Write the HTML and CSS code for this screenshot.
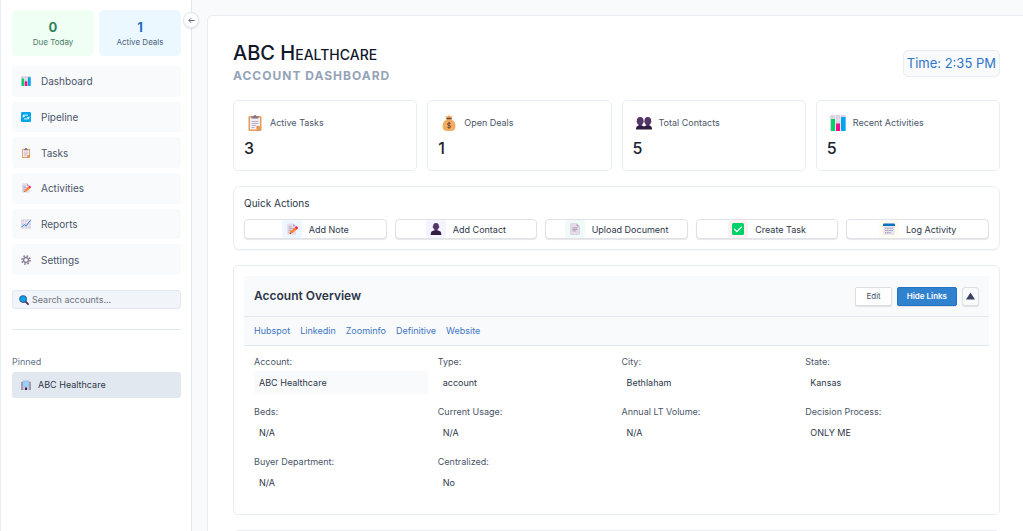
FILE: index.html
```html
<!DOCTYPE html>
<html lang="en">
<head>
  <meta charset="UTF-8">
  <title>ABC Healthcare - Account Dashboard</title>
  <link rel="stylesheet" href="styles.css">
</head>
<body>
  <svg class="sprite" aria-hidden="true">
    <symbol id="i-chart" viewBox="0 0 16 16">
      <rect width="16" height="16" rx="1.5" fill="#ddd3e3"/>
      <path d="M0 5h16M5.3 0v16M10.7 0v16" stroke="#f3eef6" stroke-width=".8"/>
      <rect x="1" y="4" width="4" height="12" fill="#00d26a"/>
      <rect x="6" y="8.500" width="4" height="7.500" fill="#f70a8d"/>
      <rect x="11" y="2" width="4.500" height="14" fill="#00a6ed"/>
    </symbol>
    <symbol id="i-sync" viewBox="0 0 16 16">
      <rect width="16" height="16" rx="2" fill="#00a6ed"/>
      <path d="M3.500 8.500V7.300Q3.500 5 6 5h5M12.500 7.500v1.200Q12.500 11 10 11H5" fill="none" stroke="#fff" stroke-width="1.500"/>
      <path d="M3 3.500v4h4zM13 12.500v-4H9z" fill="#fff"/>
    </symbol>
    <symbol id="i-clipboard" viewBox="0 0 16 16">
      <rect x="1.500" y="1" width="13" height="15" rx="1.500" fill="#e39d54"/>
      <path d="M3 2.500h10v8.500l-3.500 3.500H3z" fill="#f3eef8"/>
      <path d="M13 11l-3.500 3.500V11z" fill="#e8873a"/>
      <path d="M4.500 6.500h7M4.500 8.500h7M4.500 10.500h4.500M4.500 12.500h3" stroke="#aaa0b4" stroke-width=".8"/>
      <path d="M4.500 3.500V1.500h2a1.500 1.500 0 0 1 3 0h2v2z" fill="#7d7385"/>
    </symbol>
    <symbol id="i-memo" viewBox="0 0 16 16">
      <path d="M1.500 1.500Q1.500.5 2.500.5h7l4 4V14.500q0 1-1 1h-10q-1 0-1-1z" fill="#e5dceb"/>
      <path d="M9.500.5l4 4h-3q-1 0-1-1z" fill="#b4a6bf"/>
      <path d="M3.500 5h4M3.500 7.500h7M3.500 10h4M3.500 12.500h2" stroke="#998ea4" stroke-width=".9"/>
      <path d="M5 14.500l1-3.500 6.500-5.500 2.300 2.700-6.500 5.500z" fill="#ff822d"/>
      <path d="M12 5.900l1.300-1.200q.8-.5 1.400.1l1 1.200q.5.7-.1 1.300l-1.300 1.300z" fill="#f8124f"/>
      <path d="M5 14.500l.4-1.500 1.200 1.300z" fill="#402a32"/>
    </symbol>
    <symbol id="i-trend" viewBox="0 0 16 16">
      <rect width="16" height="15" y=".5" rx="1" fill="#ddd3e3"/>
      <path d="M0 5.500h16M0 10.500h16M5.500 0v16M10.500 0v16" stroke="#f8f3fa" stroke-width=".8"/>
      <path d="M1 13l4-4 3.500 2 3-4.500 3.500-4" fill="none" stroke="#2b88d8" stroke-width="1.600"/>
    </symbol>
    <symbol id="i-gear" viewBox="0 0 16 16">
      <circle cx="8" cy="8" r="4" fill="none" stroke="#8b8094" stroke-width="2.400"/>
      <circle cx="8" cy="8" r="6.500" fill="none" stroke="#8b8094" stroke-width="2.600" stroke-dasharray="2.700 2.404"/>
    </symbol>
    <symbol id="i-search" viewBox="0 0 16 16">
      <path d="M10 10l4.500 4.500" stroke="#533566" stroke-width="3" stroke-linecap="round"/>
      <circle cx="6.500" cy="6.500" r="5.300" fill="#00a6ed" stroke="#35609c" stroke-width="1.800"/>
    </symbol>
    <symbol id="i-office" viewBox="0 0 16 16">
      <path d="M0 3.500L3.500 2v14H0zM16 3.500L12.500 2v14H16z" fill="#998ea4"/>
      <rect x="3" y=".5" width="10" height="15.500" fill="#c3c4d6"/>
      <path d="M4 2h8v9H4z" fill="#83cbff"/>
      <path d="M4 5h8M4 8h8M8 2v9" stroke="#c9dff2" stroke-width=".7"/>
      <path d="M6.500 12h3v4h-3z" fill="#321b41"/>
      <path d="M1.500 5v9M14.500 5v9" stroke="#d3c9db" stroke-dasharray="1.500 1"/>
    </symbol>
    <symbol id="i-money" viewBox="0 0 16 16">
      <path d="M5.500 3L4 1l2.300.5L8 0l1.700 1.500L12 1l-1.500 2z" fill="#f3ad61"/>
      <path d="M6 4Q1.500 6.500 1.500 11 1.500 16 6 16h4q4.500 0 4.500-5Q14.500 6.500 10 4z" fill="#f3ad61"/>
      <rect x="5.200" y="2.800" width="5.600" height="1.500" rx=".7" fill="#6d4534"/>
      <path d="M9.700 8.500Q9.200 7.900 8 7.900q-1.500 0-1.500 1.200Q6.500 10.200 8 10.300q1.600.1 1.600 1.300Q9.600 12.800 8 12.800q-1.200 0-1.700-.8M8 6.800v7" fill="none" stroke="#6d4534" stroke-width=".9"/>
    </symbol>
    <symbol id="i-person" viewBox="0 0 16 16">
      <path d="M4.200 4Q4.200 0 8 0t3.800 4q.8.300.6 1.500-.2 1-.9 1.100Q10.900 8.500 9.500 9.300v1.500h-3V9.300Q5.100 8.500 4.500 6.600q-.7-.1-.9-1.100Q3.400 4.300 4.200 4z" fill="#533566"/>
      <path d="M1 16v-2q0-3 3-3.600l2.500-.8h3l2.500.8q3 .6 3 3.600v2z" fill="#321b41"/>
    </symbol>
    <symbol id="i-people" viewBox="0 0 16 16">
      <path d="M.9 5.500Q.9 2 4.200 2t3.300 3.500q.8.600 0 1.800-.5 2-1.800 2.700v1.500h-3V10Q1.400 9.300.9 7.300q-.8-1.200 0-1.800zM8.500 5.500Q8.500 2 11.800 2t3.300 3.500q.8.600 0 1.800-.5 2-1.800 2.700v1.500h-3V10Q9 9.300 8.500 7.300q-.8-1.200 0-1.800z" fill="#533566"/>
      <path d="M0 14.500v-1Q0 11 2.500 10.500h3.400L8 11.500l2.100-1h3.400Q16 11 16 13.500v1z" fill="#321b41"/>
    </symbol>
    <symbol id="i-page" viewBox="0 0 16 16">
      <path d="M2 1.500Q2 .5 3 .5h7l4 4v10q0 1-1 1H3q-1 0-1-1z" fill="#e5dceb" stroke="#cdbfd6" stroke-width=".7"/>
      <path d="M10 .5l4 4h-3q-1 0-1-1z" fill="#b4a6bf"/>
      <path d="M4.500 6.500h7M4.500 8.500h7M4.500 10.500h5" stroke="#998ea4"/>
    </symbol>
    <symbol id="i-check" viewBox="0 0 16 16">
      <rect width="16" height="16" rx="2" fill="#00d26a"/>
      <path d="M3 8l3.500 3.500 6.500-6.500" fill="none" stroke="#fff" stroke-width="1.800"/>
    </symbol>
    <symbol id="i-calendar" viewBox="0 0 16 16">
      <rect x=".5" y="1" width="15" height="15" rx="1.500" fill="#e9e2ef"/>
      <path d="M0 4V2Q0 .5 1.500.5h13Q16 .5 16 2v2z" fill="#0074ba"/>
      <path d="M3 7h1.400M5.800 7h1.400M8.600 7H10M11.400 7h1.400M3 10h1.400M5.800 10h1.400M8.600 10H10M3 13h1.400M5.800 13h1.400M8.600 13H10" stroke="#7d7688" stroke-width="1.400"/>
      <path d="M11.400 10h1.500" stroke="#00a6ed" stroke-width="1.600"/>
    </symbol>
  </svg>

  <div class="app">
    <aside class="sidebar">
      <button class="toggle" type="button" aria-label="Collapse sidebar">
        <svg viewBox="0 0 8 8"><path d="M7.500 4H1M3.500 1.500L1 4l2.500 2.500" fill="none" stroke="currentColor"/></svg>
      </button>

      <div class="mini-stats">
        <div class="mini-stat due"><strong>0</strong><span>Due Today</span></div>
        <div class="mini-stat deals"><strong>1</strong><span>Active Deals</span></div>
      </div>

      <nav class="menu">
        <a href="#"><svg><use href="#i-chart"/></svg>Dashboard</a>
        <a href="#"><svg><use href="#i-sync"/></svg>Pipeline</a>
        <a href="#"><svg><use href="#i-clipboard"/></svg>Tasks</a>
        <a href="#"><svg><use href="#i-memo"/></svg>Activities</a>
        <a href="#"><svg><use href="#i-trend"/></svg>Reports</a>
        <a href="#"><svg><use href="#i-gear"/></svg>Settings</a>
      </nav>

      <label class="search">
        <svg><use href="#i-search"/></svg>
        <input type="text" placeholder="Search accounts..." aria-label="Search accounts">
      </label>

      <div class="pinned">
        <h2>Pinned</h2>
        <a href="#"><svg><use href="#i-office"/></svg>ABC Healthcare</a>
      </div>
    </aside>

    <main class="main">
      <div class="panel">
        <header class="page-header">
          <div>
            <h1>ABC H<span>ealthcare</span></h1>
            <p>ACCOUNT DASHBOARD</p>
          </div>
          <div class="clock">Time: 2:35 PM</div>
        </header>

        <section class="stats">
          <div class="stat"><div class="stat-label"><svg><use href="#i-clipboard"/></svg>Active Tasks</div><strong>3</strong></div>
          <div class="stat"><div class="stat-label"><svg><use href="#i-money"/></svg>Open Deals</div><strong>1</strong></div>
          <div class="stat"><div class="stat-label"><svg><use href="#i-people"/></svg>Total Contacts</div><strong>5</strong></div>
          <div class="stat"><div class="stat-label"><svg><use href="#i-chart"/></svg>Recent Activities</div><strong>5</strong></div>
        </section>

        <section class="quick">
          <h2>Quick Actions</h2>
          <div class="quick-buttons">
            <button type="button"><span class="tile blue"><svg><use href="#i-memo"/></svg></span>Add Note</button>
            <button type="button"><span class="tile purple"><svg><use href="#i-person"/></svg></span>Add Contact</button>
            <button type="button"><span class="tile green"><svg><use href="#i-page"/></svg></span>Upload Document</button>
            <button type="button"><span class="tile red"><svg><use href="#i-check"/></svg></span>Create Task</button>
            <button type="button"><span class="tile yellow"><svg><use href="#i-calendar"/></svg></span>Log Activity</button>
          </div>
        </section>

        <section class="overview">
          <div class="overview-header">
            <h2>Account Overview</h2>
            <button class="btn" type="button">Edit</button>
            <button class="btn primary" type="button">Hide Links</button>
            <button class="btn arrow" type="button" aria-label="Collapse">
              <svg viewBox="0 0 10 8"><path d="M5 0l5 8H0z" fill="currentColor"/></svg>
            </button>
          </div>
          <div class="links">
            <a href="#">Hubspot</a>
            <a href="#">Linkedin</a>
            <a href="#">Zoominfo</a>
            <a href="#">Definitive</a>
            <a href="#">Website</a>
          </div>
          <dl class="fields">
            <div><dt>Account:</dt><dd class="active">ABC Healthcare</dd></div>
            <div><dt>Type:</dt><dd>account</dd></div>
            <div><dt>City:</dt><dd>Bethlaham</dd></div>
            <div><dt>State:</dt><dd>Kansas</dd></div>
            <div><dt>Beds:</dt><dd>N/A</dd></div>
            <div><dt>Current Usage:</dt><dd>N/A</dd></div>
            <div><dt>Annual LT Volume:</dt><dd>N/A</dd></div>
            <div><dt>Decision Process:</dt><dd>ONLY ME</dd></div>
            <div><dt>Buyer Department:</dt><dd>N/A</dd></div>
            <div><dt>Centralized:</dt><dd>No</dd></div>
          </dl>
        </section>

        <section class="next-section"></section>
      </div>
    </main>
  </div>
</body>
</html>
```
FILE: styles.css
```css
* { box-sizing: border-box; }
body {
  margin: 0;
  background-color: #f8fafc;
  color: #2d3748;
  font-family: Inter, "Liberation Sans", sans-serif;
  font-size: 9px;
  line-height: 12px;
}
h1, h2, p, dl, dd { margin: 0; }
h2 { font-weight: 400; }
a { text-decoration: none; }
button, input { font-family: inherit; color: inherit; }
button { cursor: pointer; }
.sprite { display: none; }

.app { display: flex; height: 100vh; overflow: hidden; }

/* Sidebar */
.sidebar {
  position: relative;
  flex: 0 0 192px;
  padding: 10px 10px 10px 11px;
  background-color: #fff;
  border-left: 1px solid #e8edf3;
  border-right: 1px solid #e2e8f0;
}
.toggle {
  position: absolute;
  top: 12px;
  right: -8px;
  display: flex;
  align-items: center;
  justify-content: center;
  width: 16px;
  height: 16px;
  padding: 0;
  background-color: #fff;
  border: 1px solid #e2e8f0;
  border-radius: 50%;
  box-shadow: 0 1px 2px rgba(0,0,0,0.1);
  color: #4a5568;
}
.toggle svg { width: 7px; height: 7px; }
.mini-stats { display: grid; grid-template-columns: 1fr 1fr; gap: 5px; }
.mini-stat {
  display: flex;
  flex-direction: column;
  align-items: center;
  padding: 9px 0 7px;
  border-radius: 5px;
  font-size: 8px;
}
.mini-stat strong { font-size: 13px; line-height: 16px; font-weight: 700; }
.mini-stat span { line-height: 14px; }
.mini-stat.due { background-color: #f0fff4; color: #4b7a68; }
.mini-stat.due strong { color: #2f855a; }
.mini-stat.deals { background-color: #ebf8ff; color: #4a5f7a; }
.mini-stat.deals strong { color: #1f6fc9; }

.menu {
  display: grid;
  grid-auto-rows: 1fr;
  gap: 5px;
  height: 209px;
  margin-top: 10px;
}
.menu a {
  display: flex;
  align-items: center;
  gap: 10px;
  padding: 0 9px;
  background-color: #f8fafc;
  border-radius: 4px;
  color: #4a5568;
  font-size: 10px;
}
.menu svg, .pinned svg { width: 10px; height: 10px; }

.search {
  display: flex;
  align-items: center;
  gap: 3px;
  height: 19px;
  margin-top: 15px;
  padding: 0 6px;
  background-color: #f1f5f9;
  border: 1px solid #e2e8f0;
  border-radius: 3px;
}
.search svg { flex: none; width: 10px; height: 10px; }
.search input {
  width: 100%;
  padding: 0;
  background: none;
  border: none;
  outline: none;
  font-size: 9px;
}
.search input::placeholder { color: #6b7280; }

.pinned { margin-top: 20px; padding-top: 25px; border-top: 1px solid #e2e8f0; }
.pinned h2 { font-size: 9px; line-height: 13px; color: #64748b; }
.pinned a {
  display: flex;
  align-items: center;
  gap: 7px;
  height: 26px;
  margin-top: 4px;
  padding: 0 9px;
  background-color: #e2e8f0;
  border-radius: 3px;
  color: #2d3748;
}

/* Main area */
.main { flex: 1; min-width: 0; padding: 15px 0 0 15px; }
.panel {
  min-height: 100%;
  padding: 26px 23px 26px 25px;
  background-color: #fff;
  border: 1px solid #e8edf3;
  border-right: none;
  border-radius: 6px 0 0 0;
}
.page-header {
  display: flex;
  align-items: center;
  justify-content: space-between;
  height: 42px;
}
.page-header h1 {
  color: #0f172a;
  font-size: 20px;
  line-height: 24px;
  font-weight: 500;
  text-transform: uppercase;
}
.page-header h1 span { font-size: 14px; }
.page-header p {
  color: #94a3b8;
  font-size: 12px;
  line-height: 18px;
  font-weight: 700;
  letter-spacing: 1px;
}
.clock {
  padding: 4px 3px;
  background-color: #f8fafc;
  border: 1px solid #e8edf3;
  border-radius: 5px;
  color: #2f74c8;
  font-size: 13px;
  line-height: 17px;
}

.stats {
  display: grid;
  grid-template-columns: repeat(4, 1fr);
  gap: 10px;
  margin-top: 16px;
}
.stat, .quick, .overview, .next-section { background-color: #fff; border: 1px solid #e8edf3; }
.stat { padding: 14px 10px 12px; border-radius: 5px; }
.stat-label {
  display: flex;
  align-items: center;
  gap: 7px;
  padding-left: 3px;
  color: #4a5568;
}
.stat-label svg { width: 16px; height: 16px; }
.stat strong {
  display: block;
  margin-top: 7px;
  color: #1a202c;
  font-size: 16px;
  line-height: 20px;
  font-weight: 500;
}

.quick { margin-top: 15px; padding: 9px 10px 10px; border-radius: 7px; box-shadow: 0 1px 1px rgba(0,0,0,0.04); }
.quick h2 { font-size: 10px; line-height: 14px; }
.quick-buttons {
  display: grid;
  grid-template-columns: repeat(5, 1fr);
  gap: 8px;
  margin-top: 9px;
}
.quick-buttons button {
  display: flex;
  align-items: center;
  justify-content: center;
  gap: 7px;
  height: 20px;
  padding: 0;
  background-color: #fff;
  border: 1px solid #dfe3e9;
  border-radius: 4px;
  box-shadow: 0 1px 1px rgba(0,0,0,0.1);
  font-size: 9px;
}
.tile {
  display: flex;
  align-items: center;
  justify-content: center;
  width: 20px;
  height: 18px;
  border-radius: 3px;
}
.tile svg { width: 12px; height: 12px; }
.tile.blue { background-color: #eff6ff; }
.tile.purple { background-color: #f5f3ff; }
.tile.green { background-color: #f0faf6; }
.tile.red { background-color: #fff1f1; }
.tile.yellow { background-color: #fffbf0; }

.overview { margin-top: 15px; padding: 10px 10px 20px; border-radius: 5px; }
.overview-header {
  display: flex;
  align-items: center;
  gap: 5px;
  height: 41px;
  padding: 0 10px;
  background-color: #f8fafc;
  border-bottom: 1px solid #e2e8f0;
}
.overview-header h2 { flex: 1; font-size: 12px; line-height: 16px; font-weight: 600; }
.btn {
  height: 19px;
  padding: 0 10px;
  background-color: #fff;
  border: 1px solid #dcdfe4;
  border-radius: 2px;
  box-shadow: 0 1px 1px rgba(0,0,0,0.1);
  color: #4a5568;
  font-size: 8px;
}
.btn.primary { padding: 0 9px; background-color: #3182ce; border-color: #2372c4; color: #fff; font-weight: 600; }
.btn.arrow { display: flex; align-items: center; padding: 0 3px; background-color: #f8fafc; color: #3b4161; border-radius: 3px; }
.btn.arrow svg { width: 9px; height: 8px; }
.links {
  display: flex;
  gap: 10px;
  padding: 8px 10px;
  background-color: #f8fafc;
  border-bottom: 1px solid #e2e8f0;
}
.links a { color: #3f76c4; }
.fields {
  display: grid;
  grid-template-columns: repeat(4, 1fr);
  gap: 11px 10px;
  padding: 9px 10px 0;
}
.fields dt { line-height: 13px; color: #4a5568; }
.fields dd { margin-top: 3px; padding: 5px; line-height: 13px; border-radius: 2px; }
.fields dd.active { background-color: #f8fafc; }

.next-section { height: 120px; margin-top: 15px; border-radius: 5px; }
```
